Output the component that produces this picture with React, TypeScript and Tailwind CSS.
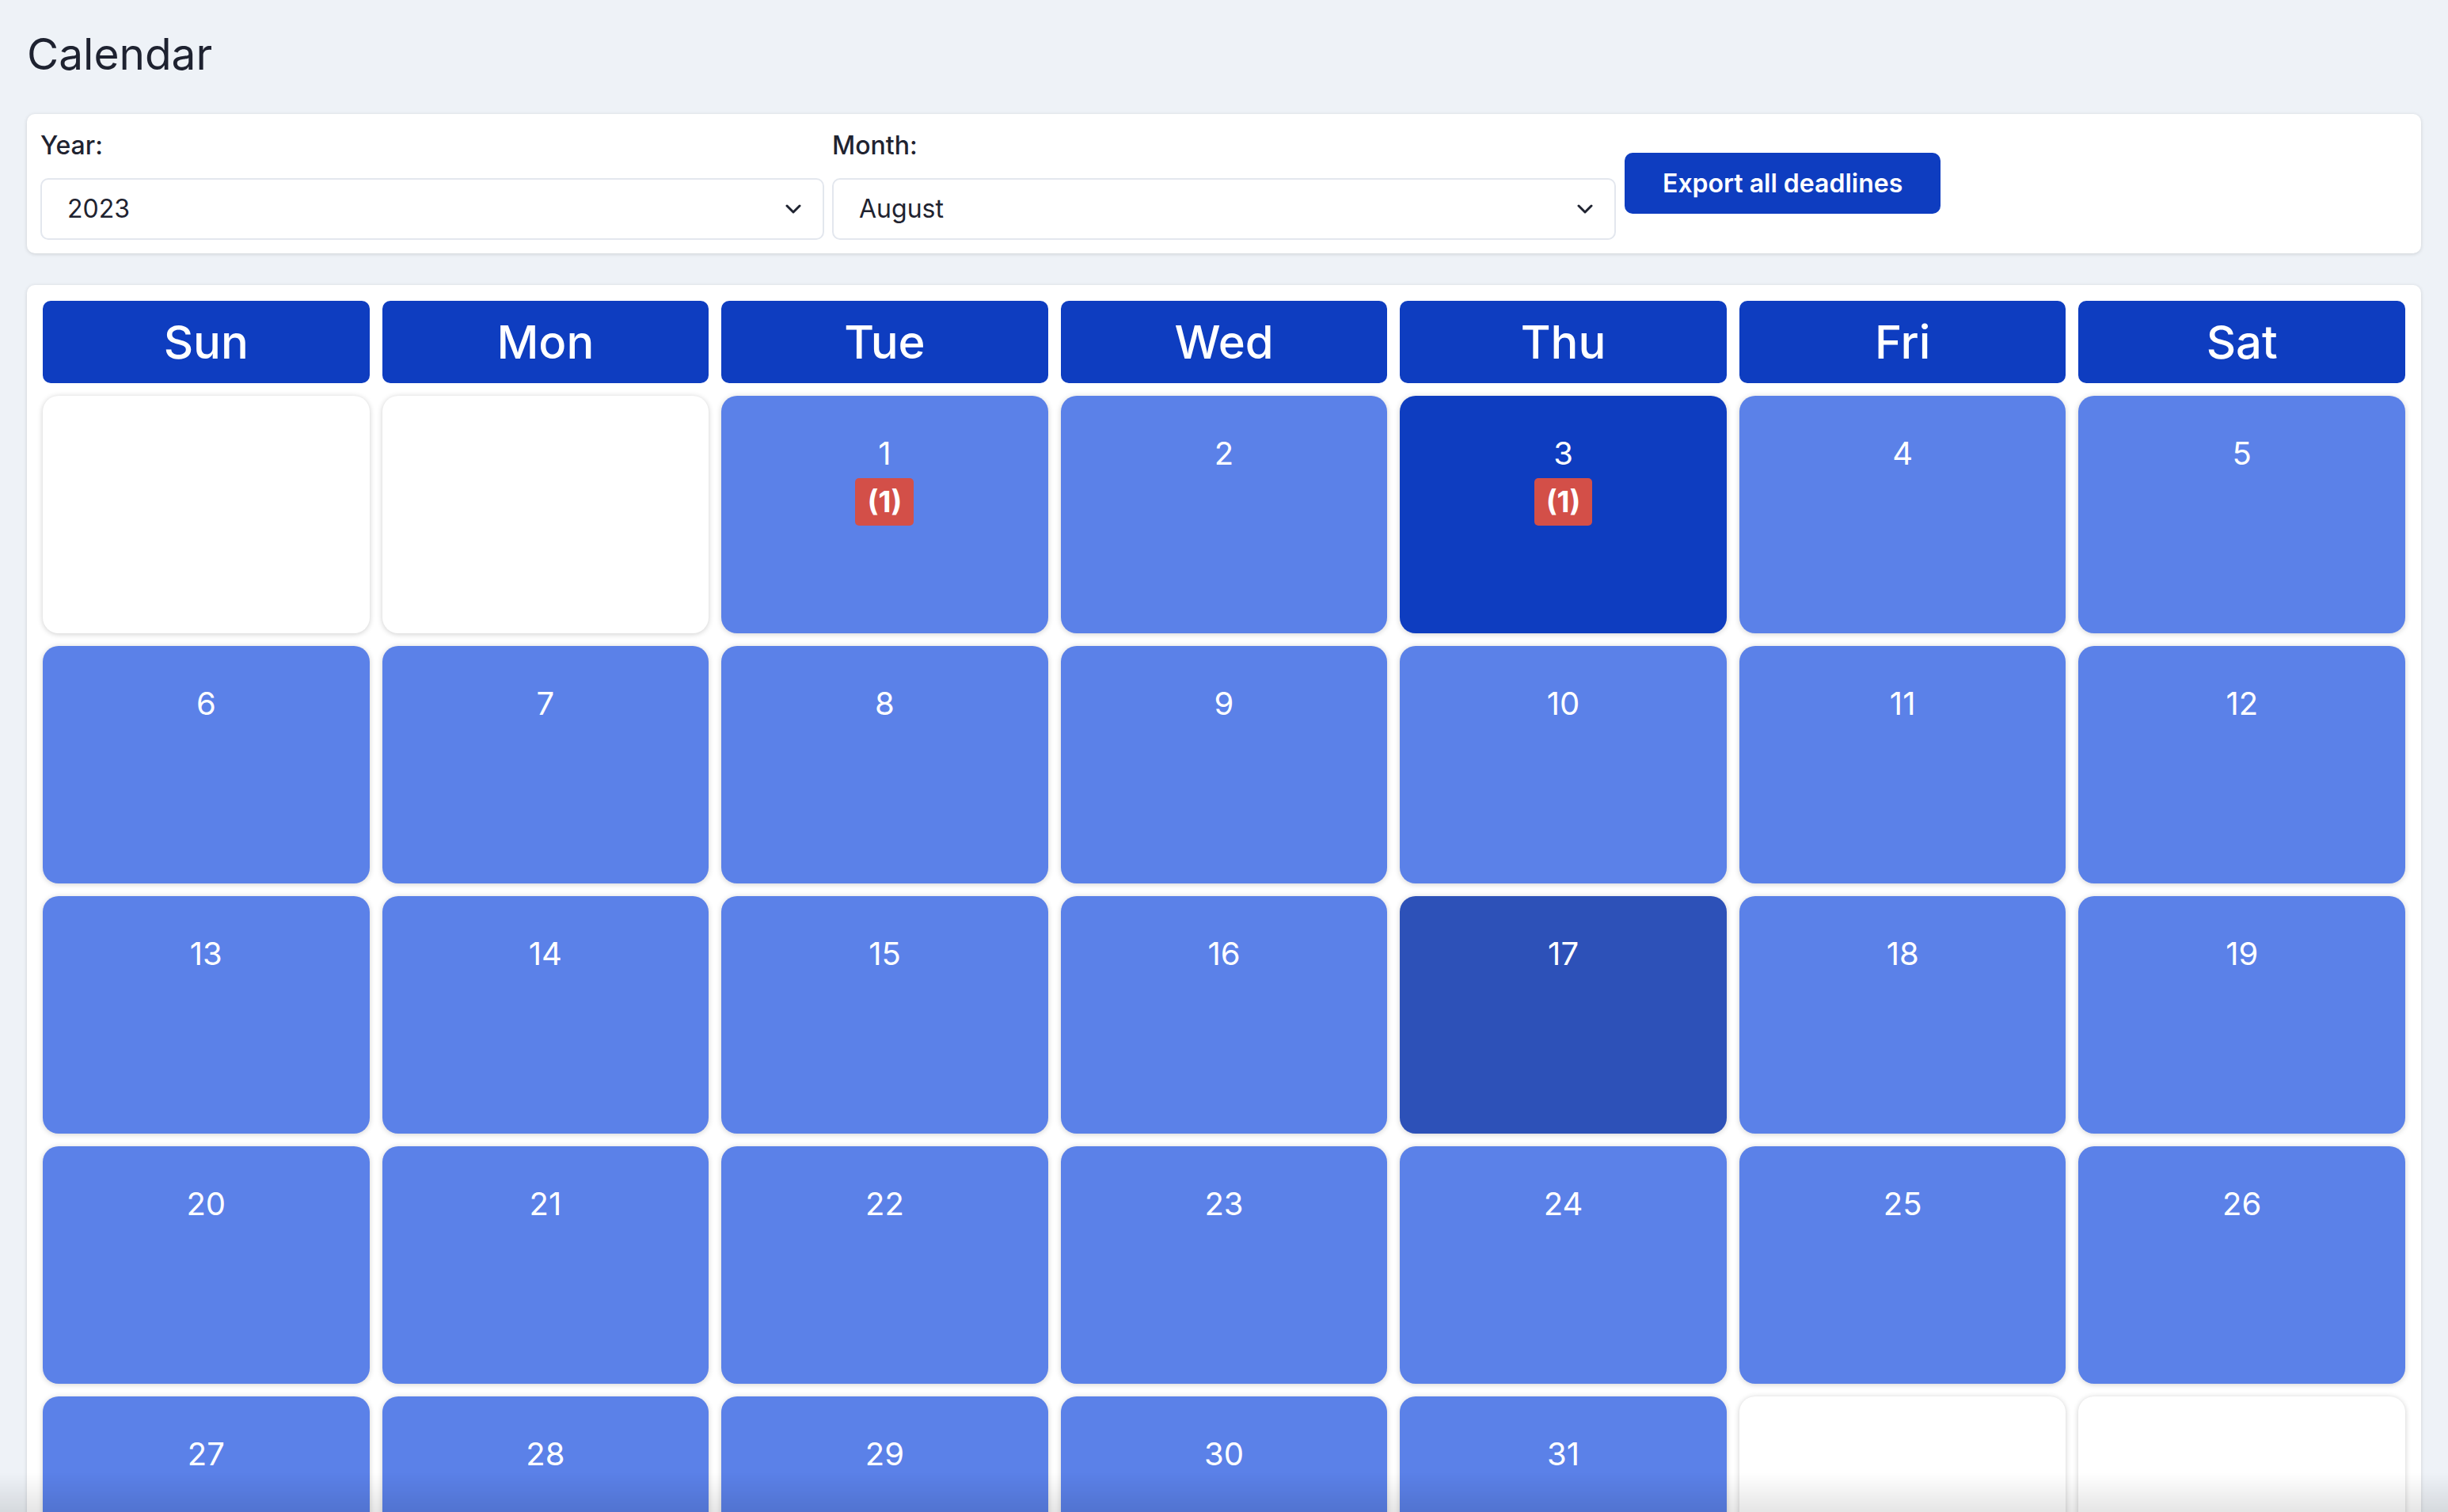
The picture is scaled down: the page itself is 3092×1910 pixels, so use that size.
import React from 'react';

const DAY_NAMES = ['Sun', 'Mon', 'Tue', 'Wed', 'Thu', 'Fri', 'Sat'];

// August 2023 starts on a Tuesday
const FIRST_WEEKDAY = 2;
const DAYS_IN_MONTH = 31;
const TODAY = 3;
const SELECTED = 17;
const DEADLINES: Record<number, number> = { 1: 1, 3: 1 };

function Chevron() {
    return (
        <svg
            className="pointer-events-none absolute right-[29px] top-1/2 -translate-y-1/2"
            width="20"
            height="12"
            viewBox="0 0 20 12"
            fill="none"
        >
            <path d="M2 2l8 8 8-8" stroke="#1f2330" strokeWidth="3" strokeLinecap="round" strokeLinejoin="round" />
        </svg>
    );
}

function SelectField({ label, value, options }: { label: string; value: string; options: string[] }) {
    return (
        <div className="flex w-[990px] flex-col">
            <label className="mb-[17px] text-[32px] font-medium leading-[48px] text-[#1f2330]">{label}</label>
            <div className="relative">
                <select
                    defaultValue={value}
                    className="h-[78px] w-full appearance-none rounded-[10px] border-2 border-[#e3e7ee] bg-white px-[32px] text-[32px] leading-[48px] text-[#1f2330] outline-none"
                >
                    {options.map((o) => (
                        <option key={o}>{o}</option>
                    ))}
                </select>
                <Chevron />
            </div>
        </div>
    );
}

function DayCell({ day }: { day: number | null }) {
    if (day === null) {
        return <div className="h-[300px] rounded-[20px] bg-white shadow-[0_1px_7px_rgba(0,0,0,0.2)]" />;
    }

    let bg = 'bg-[#5b81e8]';
    if (day === TODAY) bg = 'bg-[#0e3dc0]';
    else if (day === SELECTED) bg = 'bg-[#2d51b8]';

    const count = DEADLINES[day];

    return (
        <div className={`flex h-[300px] flex-col items-center rounded-[20px] pt-[43px] shadow-[0_1px_7px_rgba(0,0,0,0.18)] ${bg}`}>
            <span className="text-[40px] leading-[60px] text-white">{day}</span>
            {count ? (
                <span className="mt-[1px] rounded-[5px] bg-[#d34f48] px-[15px] py-[6px] text-[37px] font-bold leading-[48px] text-white">
                    ({count})
                </span>
            ) : null}
        </div>
    );
}

export default function App() {
    const cells: (number | null)[] = [];
    for (let i = 0; i < FIRST_WEEKDAY; i++) cells.push(null);
    for (let d = 1; d <= DAYS_IN_MONTH; d++) cells.push(d);
    while (cells.length % 7 !== 0) cells.push(null);

    return (
        <div className="min-h-screen bg-[#eef2f7] px-[34px] pt-[33px] pb-[40px] font-['Inter',sans-serif]">
            <h1 className="mb-[41px] text-[55px] font-normal leading-[70px] text-[#1e2230]">Calendar</h1>

            {/* Filters */}
            <div className="flex items-center gap-[10px] rounded-[10px] bg-white p-[17px] pt-[16px] shadow-[0_1px_5px_rgba(0,0,0,0.14)]">
                <SelectField label="Year:" value="2023" options={['2021', '2022', '2023', '2024', '2025']} />
                <SelectField
                    label="Month:"
                    value="August"
                    options={['January', 'February', 'March', 'April', 'May', 'June', 'July', 'August', 'September', 'October', 'November', 'December']}
                />
                <button className="ml-[1px] h-[77px] rounded-[10px] bg-[#0e3dc0] px-[48px] text-[32px] font-semibold text-white">
                    Export all deadlines
                </button>
            </div>

            {/* Calendar grid */}
            <div className="mt-[40px] rounded-[10px] bg-white px-[20px] pt-[20px] pb-[20px] shadow-[0_1px_5px_rgba(0,0,0,0.14)]">
                <div className="grid grid-cols-7 gap-4">
                    {DAY_NAMES.map((d) => (
                        <div
                            key={d}
                            className="flex h-[104px] items-center justify-center rounded-[10px] bg-[#0e3dc0] text-[58px] font-medium text-white"
                        >
                            {d}
                        </div>
                    ))}
                    {cells.map((d, i) => (
                        <DayCell key={i} day={d} />
                    ))}
                </div>
            </div>

            {/* bottom fade */}
            <div className="pointer-events-none fixed inset-x-0 bottom-0 h-[50px] bg-linear-to-b from-transparent to-black/10" />
        </div>
    );
}
